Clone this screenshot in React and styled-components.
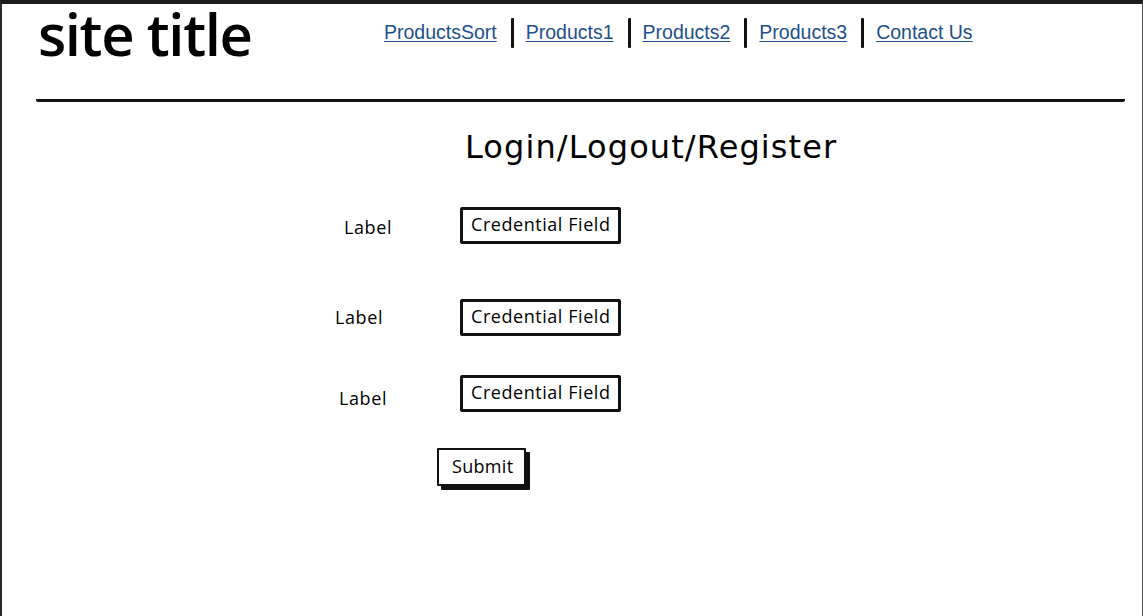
import React from "react";
import styled, { createGlobalStyle } from "styled-components";

const Global = createGlobalStyle`
  html, body { margin: 0; padding: 0; background: #fff; overflow: hidden; }
  body { font-family: "Open Sans", sans-serif; color: #111; }
`;

const Frame = styled.div`
  box-sizing: border-box;
  width: 1143px;
  height: 640px;
  border-top: 4px solid #1c1c1c;
  border-left: 2px solid #2a2a2a;
  border-right: 1px solid #555;
  padding: 0 17px 0 34px;
`;

const Header = styled.header`
  display: flex;
  align-items: flex-start;
  height: 95px;
  border-bottom: 3px solid #111;
  border-radius: 0 0 2px 2px;
`;

const Title = styled.h1`
  flex: 0 0 348px;
  margin: 0;
  padding-left: 2px;
  box-sizing: border-box;
  font-family: "Open Sans", sans-serif;
  font-weight: 600;
  font-size: 58px;
  line-height: 60px;
  letter-spacing: -1.4px;
  color: #000;
`;

const Nav = styled.nav`
  display: flex;
  align-items: center;
  margin: 12px 0 0 0;
`;

const NavLink = styled.a`
  font-family: "Liberation Sans", Arial, sans-serif;
  font-size: 19.5px;
  color: #1d4f8c;
  text-decoration: underline;
  text-underline-offset: 2px;
  cursor: pointer;
`;

const Sep = styled.span`
  display: block;
  width: 3px;
  height: 30px;
  margin: 2px 12px 0 14px;
  background: #111;
  border-radius: 1px;
`;

const Main = styled.main`
  display: flex;
  flex-direction: column;
`;

const Heading = styled.h2`
  margin: 25px 0 0 429px;
  font-family: "DejaVu Sans", sans-serif;
  font-weight: 400;
  font-size: 32px;
  letter-spacing: 1.1px;
  line-height: 40px;
  color: #000;
`;

const Form = styled.form`
  display: flex;
  flex-direction: column;
  margin-left: 296px;
`;

const Row = styled.div`
  display: flex;
  align-items: center;
  height: 38px;
  margin-top: ${(p) => p.$top}px;
`;

const Label = styled.label`
  width: 128px;
  box-sizing: border-box;
  padding-left: ${(p) => p.$indent}px;
  padding-top: ${(p) => p.$drop}px;
  font-size: 18px;
  letter-spacing: 0.6px;
  color: #000;
`;

const Field = styled.div`
  box-sizing: border-box;
  width: 161px;
  height: 37px;
  border: 3px solid #111;
  border-radius: 2px;
  padding: 0 0 0 8px;
  font-size: 18px;
  letter-spacing: 0.55px;
  line-height: 28px;
  color: #000;
  background: #fff;
  white-space: nowrap;
`;

const SubmitButton = styled.button`
  align-self: flex-start;
  margin: 36px 0 0 105px;
  box-sizing: border-box;
  width: 89px;
  height: 38px;
  border: 2px solid #111;
  border-radius: 1px;
  box-shadow: 4px 4px 0 #111;
  background: #fff;
  padding: 0 0 3px 13px;
  font-family: "Open Sans", sans-serif;
  font-size: 18px;
  letter-spacing: 0.3px;
  color: #000;
  text-align: left;
  cursor: pointer;
`;

const links = ["ProductsSort", "Products1", "Products2", "Products3", "Contact Us"];

const rows = [
  { top: 39, indent: 12, drop: 4 },
  { top: 54, indent: 3, drop: 0 },
  { top: 38, indent: 7, drop: 10 },
];

export default function App() {
  return (
    <>
      <Global />
      <Frame>
        <Header>
          <Title>site title</Title>
          <Nav>
            {links.map((l, i) => (
              <React.Fragment key={l}>
                {i > 0 && <Sep />}
                <NavLink>{l}</NavLink>
              </React.Fragment>
            ))}
          </Nav>
        </Header>
        <Main>
          <Heading>Login/Logout/Register</Heading>
          <Form>
            {rows.map((r, i) => (
              <Row key={i} $top={r.top}>
                <Label $indent={r.indent} $drop={r.drop}>Label</Label>
                <Field>Credential Field</Field>
              </Row>
            ))}
            <SubmitButton type="button">Submit</SubmitButton>
          </Form>
        </Main>
      </Frame>
    </>
  );
}
